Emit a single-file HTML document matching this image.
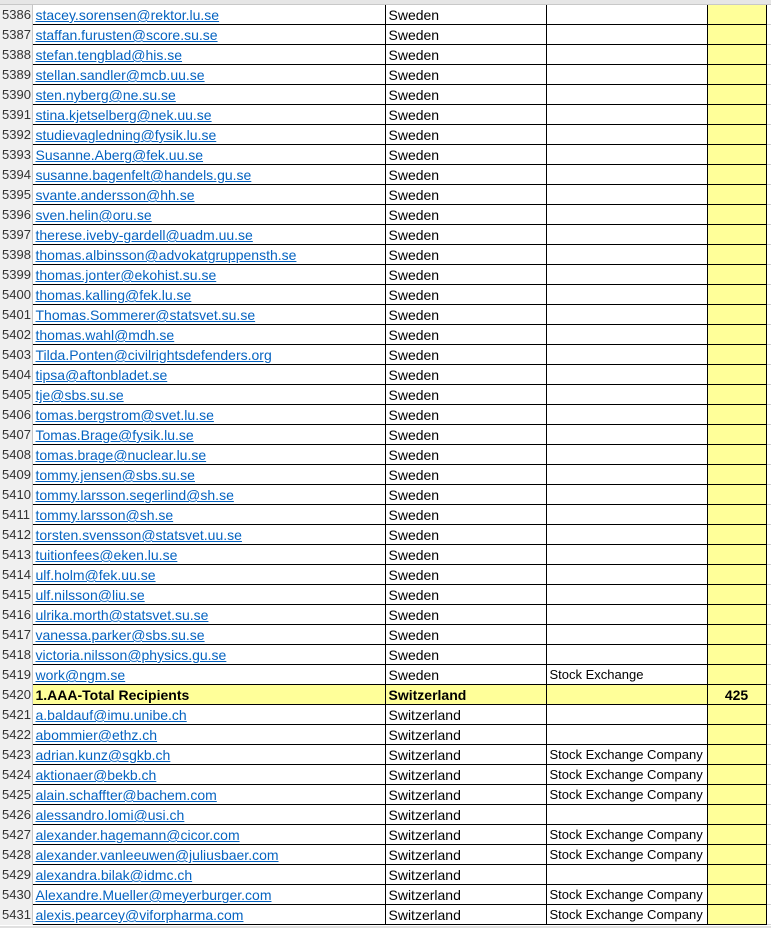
<!DOCTYPE html>
<html><head><meta charset="utf-8"><style>
html,body{margin:0;padding:0;background:#fff;width:771px;height:928px;overflow:hidden;font-family:"Liberation Sans",sans-serif;font-size:14px;}
#top{position:absolute;left:0;top:0;width:771px;height:4px;background:#e6e6e6;border-bottom:1px solid #c8c8c8;}
#bot{position:absolute;left:0;top:926px;width:771px;height:2px;background:#e0e0e0;}
table{position:absolute;left:0;top:5px;border-collapse:collapse;table-layout:fixed;width:771px;}
td{height:18px;padding:1px 0 0 3px;border-bottom:1px solid #000;white-space:nowrap;overflow:hidden;line-height:18px;vertical-align:middle;}
td.h{padding:1px 0 0 2px;background:#f0f0f0;color:#333;border-bottom:none;border-right:1px solid #c6c6c6;font-size:13px;}
td.a{border-right:1px solid #000;}
td.b{border-right:1px solid #000;}
td.c{border-right:1px solid #000;font-size:13px;}
td.d{background:#ffff99;border-right:1px solid #000;padding:1px 0 0 0;text-align:center;font-weight:bold;}
td.e{padding:0;border-bottom:1px solid #d4d4d4;}
a{color:#0563c1;text-decoration:underline;}
tr.y td.a,tr.y td.b,tr.y td.c{background:#ffff99;font-weight:bold;}
</style></head><body>
<div id="top"></div>
<table>
<colgroup><col style="width:32px"><col style="width:353px"><col style="width:161px"><col style="width:161px"><col style="width:59px"><col style="width:5px"></colgroup>
<tr><td class="h">5386</td><td class="a"><a>stacey.sorensen@rektor.lu.se</a></td><td class="b">Sweden</td><td class="c"></td><td class="d"></td><td class="e"></td></tr>
<tr><td class="h">5387</td><td class="a"><a>staffan.furusten@score.su.se</a></td><td class="b">Sweden</td><td class="c"></td><td class="d"></td><td class="e"></td></tr>
<tr><td class="h">5388</td><td class="a"><a>stefan.tengblad@his.se</a></td><td class="b">Sweden</td><td class="c"></td><td class="d"></td><td class="e"></td></tr>
<tr><td class="h">5389</td><td class="a"><a>stellan.sandler@mcb.uu.se</a></td><td class="b">Sweden</td><td class="c"></td><td class="d"></td><td class="e"></td></tr>
<tr><td class="h">5390</td><td class="a"><a>sten.nyberg@ne.su.se</a></td><td class="b">Sweden</td><td class="c"></td><td class="d"></td><td class="e"></td></tr>
<tr><td class="h">5391</td><td class="a"><a>stina.kjetselberg@nek.uu.se</a></td><td class="b">Sweden</td><td class="c"></td><td class="d"></td><td class="e"></td></tr>
<tr><td class="h">5392</td><td class="a"><a>studievagledning@fysik.lu.se</a></td><td class="b">Sweden</td><td class="c"></td><td class="d"></td><td class="e"></td></tr>
<tr><td class="h">5393</td><td class="a"><a>Susanne.Aberg@fek.uu.se</a></td><td class="b">Sweden</td><td class="c"></td><td class="d"></td><td class="e"></td></tr>
<tr><td class="h">5394</td><td class="a"><a>susanne.bagenfelt@handels.gu.se</a></td><td class="b">Sweden</td><td class="c"></td><td class="d"></td><td class="e"></td></tr>
<tr><td class="h">5395</td><td class="a"><a>svante.andersson@hh.se</a></td><td class="b">Sweden</td><td class="c"></td><td class="d"></td><td class="e"></td></tr>
<tr><td class="h">5396</td><td class="a"><a>sven.helin@oru.se</a></td><td class="b">Sweden</td><td class="c"></td><td class="d"></td><td class="e"></td></tr>
<tr><td class="h">5397</td><td class="a"><a>therese.iveby-gardell@uadm.uu.se</a></td><td class="b">Sweden</td><td class="c"></td><td class="d"></td><td class="e"></td></tr>
<tr><td class="h">5398</td><td class="a"><a>thomas.albinsson@advokatgruppensth.se</a></td><td class="b">Sweden</td><td class="c"></td><td class="d"></td><td class="e"></td></tr>
<tr><td class="h">5399</td><td class="a"><a>thomas.jonter@ekohist.su.se</a></td><td class="b">Sweden</td><td class="c"></td><td class="d"></td><td class="e"></td></tr>
<tr><td class="h">5400</td><td class="a"><a>thomas.kalling@fek.lu.se</a></td><td class="b">Sweden</td><td class="c"></td><td class="d"></td><td class="e"></td></tr>
<tr><td class="h">5401</td><td class="a"><a>Thomas.Sommerer@statsvet.su.se</a></td><td class="b">Sweden</td><td class="c"></td><td class="d"></td><td class="e"></td></tr>
<tr><td class="h">5402</td><td class="a"><a>thomas.wahl@mdh.se</a></td><td class="b">Sweden</td><td class="c"></td><td class="d"></td><td class="e"></td></tr>
<tr><td class="h">5403</td><td class="a"><a>Tilda.Ponten@civilrightsdefenders.org</a></td><td class="b">Sweden</td><td class="c"></td><td class="d"></td><td class="e"></td></tr>
<tr><td class="h">5404</td><td class="a"><a>tipsa@aftonbladet.se</a></td><td class="b">Sweden</td><td class="c"></td><td class="d"></td><td class="e"></td></tr>
<tr><td class="h">5405</td><td class="a"><a>tje@sbs.su.se</a></td><td class="b">Sweden</td><td class="c"></td><td class="d"></td><td class="e"></td></tr>
<tr><td class="h">5406</td><td class="a"><a>tomas.bergstrom@svet.lu.se</a></td><td class="b">Sweden</td><td class="c"></td><td class="d"></td><td class="e"></td></tr>
<tr><td class="h">5407</td><td class="a"><a>Tomas.Brage@fysik.lu.se</a></td><td class="b">Sweden</td><td class="c"></td><td class="d"></td><td class="e"></td></tr>
<tr><td class="h">5408</td><td class="a"><a>tomas.brage@nuclear.lu.se</a></td><td class="b">Sweden</td><td class="c"></td><td class="d"></td><td class="e"></td></tr>
<tr><td class="h">5409</td><td class="a"><a>tommy.jensen@sbs.su.se</a></td><td class="b">Sweden</td><td class="c"></td><td class="d"></td><td class="e"></td></tr>
<tr><td class="h">5410</td><td class="a"><a>tommy.larsson.segerlind@sh.se</a></td><td class="b">Sweden</td><td class="c"></td><td class="d"></td><td class="e"></td></tr>
<tr><td class="h">5411</td><td class="a"><a>tommy.larsson@sh.se</a></td><td class="b">Sweden</td><td class="c"></td><td class="d"></td><td class="e"></td></tr>
<tr><td class="h">5412</td><td class="a"><a>torsten.svensson@statsvet.uu.se</a></td><td class="b">Sweden</td><td class="c"></td><td class="d"></td><td class="e"></td></tr>
<tr><td class="h">5413</td><td class="a"><a>tuitionfees@eken.lu.se</a></td><td class="b">Sweden</td><td class="c"></td><td class="d"></td><td class="e"></td></tr>
<tr><td class="h">5414</td><td class="a"><a>ulf.holm@fek.uu.se</a></td><td class="b">Sweden</td><td class="c"></td><td class="d"></td><td class="e"></td></tr>
<tr><td class="h">5415</td><td class="a"><a>ulf.nilsson@liu.se</a></td><td class="b">Sweden</td><td class="c"></td><td class="d"></td><td class="e"></td></tr>
<tr><td class="h">5416</td><td class="a"><a>ulrika.morth@statsvet.su.se</a></td><td class="b">Sweden</td><td class="c"></td><td class="d"></td><td class="e"></td></tr>
<tr><td class="h">5417</td><td class="a"><a>vanessa.parker@sbs.su.se</a></td><td class="b">Sweden</td><td class="c"></td><td class="d"></td><td class="e"></td></tr>
<tr><td class="h">5418</td><td class="a"><a>victoria.nilsson@physics.gu.se</a></td><td class="b">Sweden</td><td class="c"></td><td class="d"></td><td class="e"></td></tr>
<tr><td class="h">5419</td><td class="a"><a>work@ngm.se</a></td><td class="b">Sweden</td><td class="c">Stock Exchange</td><td class="d"></td><td class="e"></td></tr>
<tr class="y"><td class="h">5420</td><td class="a">1.AAA-Total Recipients</td><td class="b">Switzerland</td><td class="c"></td><td class="d">425</td><td class="e"></td></tr>
<tr><td class="h">5421</td><td class="a"><a>a.baldauf@imu.unibe.ch</a></td><td class="b">Switzerland</td><td class="c"></td><td class="d"></td><td class="e"></td></tr>
<tr><td class="h">5422</td><td class="a"><a>abommier@ethz.ch</a></td><td class="b">Switzerland</td><td class="c"></td><td class="d"></td><td class="e"></td></tr>
<tr><td class="h">5423</td><td class="a"><a>adrian.kunz@sgkb.ch</a></td><td class="b">Switzerland</td><td class="c">Stock Exchange Company</td><td class="d"></td><td class="e"></td></tr>
<tr><td class="h">5424</td><td class="a"><a>aktionaer@bekb.ch</a></td><td class="b">Switzerland</td><td class="c">Stock Exchange Company</td><td class="d"></td><td class="e"></td></tr>
<tr><td class="h">5425</td><td class="a"><a>alain.schaffter@bachem.com</a></td><td class="b">Switzerland</td><td class="c">Stock Exchange Company</td><td class="d"></td><td class="e"></td></tr>
<tr><td class="h">5426</td><td class="a"><a>alessandro.lomi@usi.ch</a></td><td class="b">Switzerland</td><td class="c"></td><td class="d"></td><td class="e"></td></tr>
<tr><td class="h">5427</td><td class="a"><a>alexander.hagemann@cicor.com</a></td><td class="b">Switzerland</td><td class="c">Stock Exchange Company</td><td class="d"></td><td class="e"></td></tr>
<tr><td class="h">5428</td><td class="a"><a>alexander.vanleeuwen@juliusbaer.com</a></td><td class="b">Switzerland</td><td class="c">Stock Exchange Company</td><td class="d"></td><td class="e"></td></tr>
<tr><td class="h">5429</td><td class="a"><a>alexandra.bilak@idmc.ch</a></td><td class="b">Switzerland</td><td class="c"></td><td class="d"></td><td class="e"></td></tr>
<tr><td class="h">5430</td><td class="a"><a>Alexandre.Mueller@meyerburger.com</a></td><td class="b">Switzerland</td><td class="c">Stock Exchange Company</td><td class="d"></td><td class="e"></td></tr>
<tr><td class="h">5431</td><td class="a"><a>alexis.pearcey@viforpharma.com</a></td><td class="b">Switzerland</td><td class="c">Stock Exchange Company</td><td class="d"></td><td class="e"></td></tr>
</table>
<div id="bot"></div>
</body></html>
